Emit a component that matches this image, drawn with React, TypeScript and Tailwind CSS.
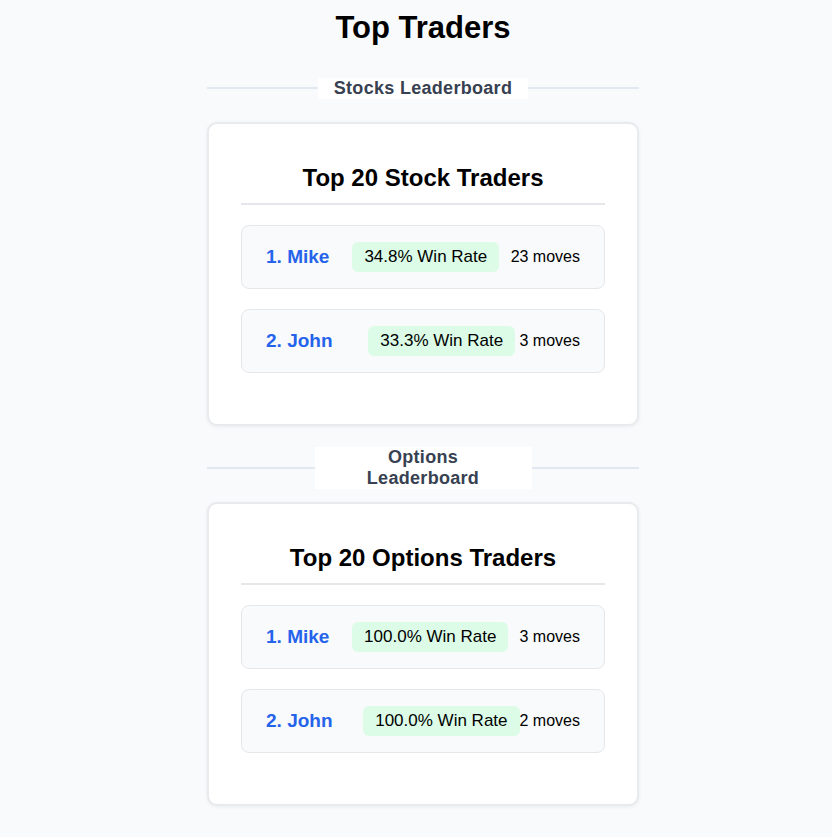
import React from "react";

type Trader = {
    rank: number;
    name: string;
    winRate: string;
    moves: number;
    nameWidth: string;
};

const stockTraders: Trader[] = [
    { rank: 1, name: "Mike", winRate: "34.8%", moves: 23, nameWidth: "w-[75px]" },
    { rank: 2, name: "John", winRate: "33.3%", moves: 3, nameWidth: "w-[98px]" },
];

const optionTraders: Trader[] = [
    { rank: 1, name: "Mike", winRate: "100.0%", moves: 3, nameWidth: "w-[75px]" },
    { rank: 2, name: "John", winRate: "100.0%", moves: 2, nameWidth: "w-[98px]" },
];

function Divider({ label, labelClass }: { label: string; labelClass: string }) {
    return (
        <div className="mt-[41px] mb-[33px] flex h-0.5 items-center">
            <div className="h-0.5 flex-1 bg-[#e2e8f0]" />
            <span className={`bg-white text-center text-[18px] font-bold leading-[21px] tracking-[0.3px] text-[#374151] ${labelClass}`}>
                {label}
            </span>
            <div className="h-0.5 flex-1 bg-[#e2e8f0]" />
        </div>
    );
}

function Leaderboard({ title, traders }: { title: string; traders: Trader[] }) {
    return (
        <div className="rounded-[10px] border-2 border-[#e8eaee] bg-white px-8 pt-8 pb-[31px] shadow-[0_1px_4px_rgba(0,0,0,0.06)]">
            <h2 className="mb-5 border-b-2 border-[#e5e7eb] pt-[7px] pb-[11px] text-center text-[24px] font-bold leading-[29px] text-black">
                {title}
            </h2>
            {traders.map((t) => (
                <div
                    key={t.rank}
                    className="mb-5 flex items-center justify-between rounded-lg border border-[#e5e7eb] bg-[#f9fafb] px-6 py-4"
                >
                    <span className={`text-[19px] font-bold leading-[22px] text-[#2563eb] ${t.nameWidth}`}>
                        {t.rank}. {t.name}
                    </span>
                    <span className="flex h-[30px] items-center whitespace-nowrap rounded-md bg-[#dcfce7] px-3 text-[17px] text-black">
                        {t.winRate} Win Rate
                    </span>
                    <span className="whitespace-nowrap text-[16px] text-black">{t.moves} moves</span>
                </div>
            ))}
        </div>
    );
}

export default function App() {
    return (
        <div
            className="min-h-[837px] bg-[#f8fafc] pb-8 pl-[14px]"
            style={{ fontFamily: '"Liberation Sans", Arial, sans-serif' }}
        >
            <div className="mx-auto w-[432px] pt-[10px]">
                <h1 className="text-center text-[31px] font-bold leading-[36px] text-black">Top Traders</h1>

                <Divider label="Stocks Leaderboard" labelClass="w-[210px] whitespace-nowrap" />
                <Leaderboard title="Top 20 Stock Traders" traders={stockTraders} />

                <Divider label="Options Leaderboard" labelClass="w-[217px] px-6" />
                <Leaderboard title="Top 20 Options Traders" traders={optionTraders} />
            </div>
        </div>
    );
}
